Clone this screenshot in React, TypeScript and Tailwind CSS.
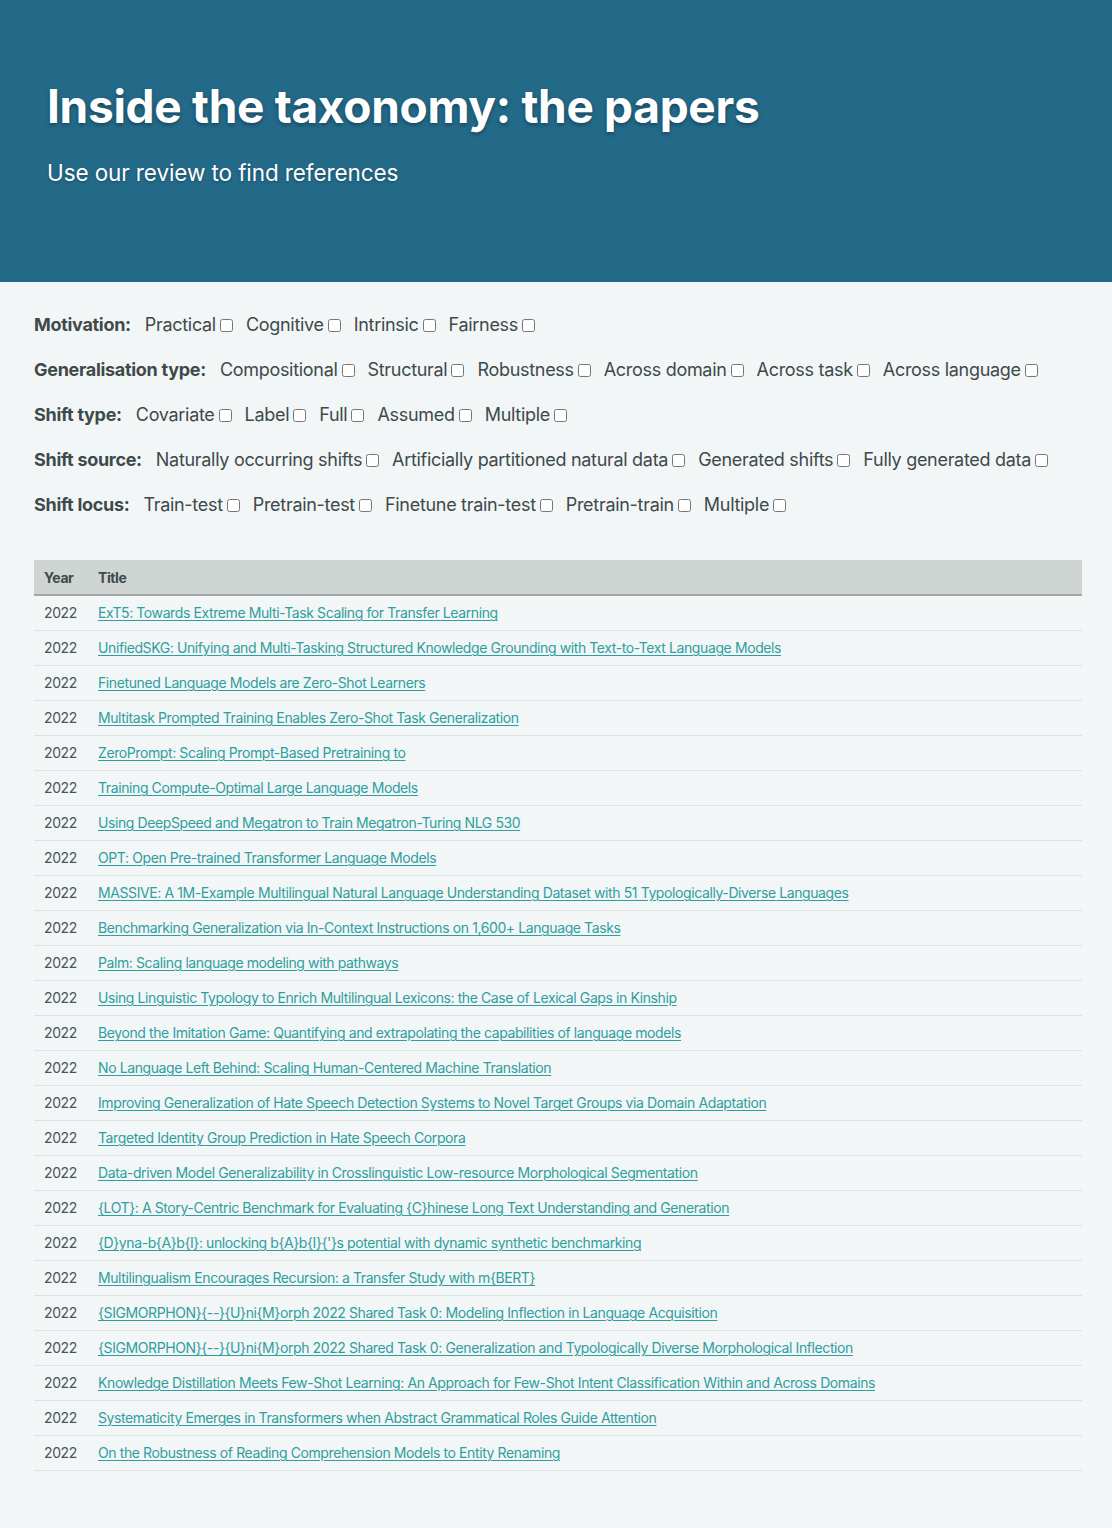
const filters: { label: string; options: string[] }[] = [
  { label: 'Motivation', options: ['Practical', 'Cognitive', 'Intrinsic', 'Fairness'] },
  {
    label: 'Generalisation type',
    options: ['Compositional', 'Structural', 'Robustness', 'Across domain', 'Across task', 'Across language'],
  },
  { label: 'Shift type', options: ['Covariate', 'Label', 'Full', 'Assumed', 'Multiple'] },
  {
    label: 'Shift source',
    options: ['Naturally occurring shifts', 'Artificially partitioned natural data', 'Generated shifts', 'Fully generated data'],
  },
  { label: 'Shift locus', options: ['Train-test', 'Pretrain-test', 'Finetune train-test', 'Pretrain-train', 'Multiple'] },
];

const papers: string[] = [
  'ExT5: Towards Extreme Multi-Task Scaling for Transfer Learning',
  'UnifiedSKG: Unifying and Multi-Tasking Structured Knowledge Grounding with Text-to-Text Language Models',
  'Finetuned Language Models are Zero-Shot Learners',
  'Multitask Prompted Training Enables Zero-Shot Task Generalization',
  'ZeroPrompt: Scaling Prompt-Based Pretraining to',
  'Training Compute-Optimal Large Language Models',
  'Using DeepSpeed and Megatron to Train Megatron-Turing NLG 530',
  'OPT: Open Pre-trained Transformer Language Models',
  'MASSIVE: A 1M-Example Multilingual Natural Language Understanding Dataset with 51 Typologically-Diverse Languages',
  'Benchmarking Generalization via In-Context Instructions on 1,600+ Language Tasks',
  'Palm: Scaling language modeling with pathways',
  'Using Linguistic Typology to Enrich Multilingual Lexicons: the Case of Lexical Gaps in Kinship',
  'Beyond the Imitation Game: Quantifying and extrapolating the capabilities of language models',
  'No Language Left Behind: Scaling Human-Centered Machine Translation',
  'Improving Generalization of Hate Speech Detection Systems to Novel Target Groups via Domain Adaptation',
  'Targeted Identity Group Prediction in Hate Speech Corpora',
  'Data-driven Model Generalizability in Crosslinguistic Low-resource Morphological Segmentation',
  '{LOT}: A Story-Centric Benchmark for Evaluating {C}hinese Long Text Understanding and Generation',
  "{D}yna-b{A}b{I}: unlocking b{A}b{I}{'}s potential with dynamic synthetic benchmarking",
  'Multilingualism Encourages Recursion: a Transfer Study with m{BERT}',
  '{SIGMORPHON}{--}{U}ni{M}orph 2022 Shared Task 0: Modeling Inflection in Language Acquisition',
  '{SIGMORPHON}{--}{U}ni{M}orph 2022 Shared Task 0: Generalization and Typologically Diverse Morphological Inflection',
  'Knowledge Distillation Meets Few-Shot Learning: An Approach for Few-Shot Intent Classification Within and Across Domains',
  'Systematicity Emerges in Transformers when Abstract Grammatical Roles Guide Attention',
  'On the Robustness of Reading Comprehension Models to Entity Renaming',
];

export default function App() {
  return (
    <div className="min-h-[1528px] bg-[#f2f6f6] font-['Inter','Noto_Sans',sans-serif] text-[#3e4a4a]">
      {/* Hero */}
      <header className="h-[282px] bg-[#236a89] px-[47px] pt-[78px] text-white">
        <h1 className="text-[46px] font-bold leading-[56px] tracking-[-0.3px] [text-shadow:0_2px_4px_rgba(0,0,0,0.35)]">
          Inside the taxonomy: the papers
        </h1>
        <p className="mt-[24px] text-[22.5px] leading-[30px] tracking-[-0.1px] [text-shadow:0_1px_3px_rgba(0,0,0,0.3)]">
          Use our review to find references
        </p>
      </header>

      {/* Filters */}
      <div className="pl-[34px] pr-[30px] mt-[31px] flex flex-col gap-[21px]">
        {filters.map((f) => (
          <div
            key={f.label}
            className="flex items-center h-[24px] text-[18px] leading-[24px] tracking-[-0.3px] whitespace-nowrap"
          >
            <span className="font-bold mr-[14px] shrink-0">{f.label}:</span>
            {f.options.map((o) => (
              <label key={o} className="flex items-center mr-[13px] shrink-0">
                <span>{o}</span>
                <input type="checkbox" className="ml-[4px] w-[13px] h-[13px]" />
              </label>
            ))}
          </div>
        ))}
      </div>

      {/* Table */}
      <div className="pl-[34px] pr-[30px] mt-[43px]">
        <table className="w-full border-collapse text-[14px] tracking-[-0.4px]">
          <thead>
            <tr className="bg-[#cfd5d3] border-b-2 border-[#a2a6a5]">
              <th className="h-[35px] pl-[10px] pr-0 w-[64px] text-left font-bold">Year</th>
              <th className="h-[35px] text-left font-bold">Title</th>
            </tr>
          </thead>
          <tbody>
            {papers.map((p, i) => (
              <tr key={i} className="border-b border-[#dde2e2]">
                <td className="h-[35px] pl-[10px] text-[#4a5454]">2022</td>
                <td className="h-[35px]">
                  <a href="#" className="text-[#2f9ea0] underline underline-offset-2 decoration-1">
                    {p}
                  </a>
                </td>
              </tr>
            ))}
          </tbody>
        </table>
      </div>
    </div>
  );
}
